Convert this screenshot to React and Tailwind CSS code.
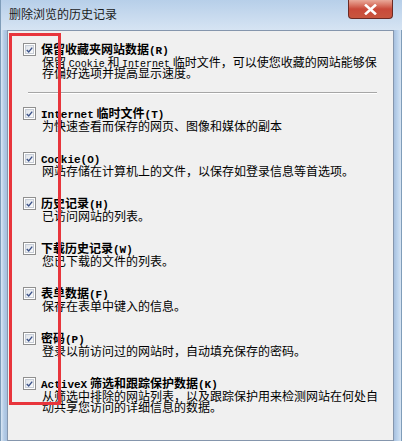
import React from 'react';

const items = [
    {
        title: [{ t: '保留收藏夹网站数据' }, { t: '(R)', m: true }],
        desc: [
            [{ t: '保留 ' }, { t: 'Cookie', m: true }, { t: ' 和 ' }, { t: 'Internet', m: true }, { t: ' 临时文件，可以使您收藏的网站能够保' }],
            [{ t: '存偏好选项并提高显示速度。' }],
        ],
    },
    {
        title: [{ t: 'Internet', m: true }, { t: ' 临时文件' }, { t: '(T)', m: true }],
        desc: [[{ t: '为快速查看而保存的网页、图像和媒体的副本' }]],
    },
    {
        title: [{ t: 'Cookie(O)', m: true }],
        desc: [[{ t: '网站存储在计算机上的文件，以保存如登录信息等首选项。' }]],
    },
    {
        title: [{ t: '历史记录' }, { t: '(H)', m: true }],
        desc: [[{ t: '已访问网站的列表。' }]],
    },
    {
        title: [{ t: '下载历史记录' }, { t: '(W)', m: true }],
        desc: [[{ t: '您已下载的文件的列表。' }]],
    },
    {
        title: [{ t: '表单数据' }, { t: '(F)', m: true }],
        desc: [[{ t: '保存在表单中键入的信息。' }]],
    },
    {
        title: [{ t: '密码' }, { t: '(P)', m: true }],
        desc: [[{ t: '登录以前访问过的网站时，自动填充保存的密码。' }]],
    },
    {
        title: [{ t: 'ActiveX', m: true }, { t: ' 筛选和跟踪保护数据' }, { t: '(K)', m: true }],
        desc: [
            [{ t: '从筛选中排除的网站列表，以及跟踪保护用来检测网站在何处自' }],
            [{ t: '动共享您访问的详细信息的数据。' }],
        ],
    },
];

// Win7 style checked box
const CheckBox = () => (
    <div className="w-[13px] h-[13px] shrink-0 border border-[#8f8f8f] bg-white p-[1px] mt-[1px]">
        <div className="w-full h-full border border-[#c7cdd6] bg-gradient-to-br from-[#dfe3e9] to-[#fbfbfb] flex items-center justify-center">
            <svg width="9" height="8" viewBox="0 0 9 8">
                <path d="M1 4 L3.5 6.5 L8 1" fill="none" stroke="#3b5289" strokeWidth="1.8" />
            </svg>
        </div>
    </div>
);

const Runs = ({ runs, bold }) =>
    runs.map((r, i) =>
        r.m ? (
            <span
                key={i}
                className={bold ? "font-['Liberation_Mono',monospace] text-[11px] font-bold" : "font-['Liberation_Mono',monospace] text-[10px]"}
            >
                {r.t}
            </span>
        ) : (
            <span key={i}>{r.t}</span>
        )
    );

const Item = ({ item }) => (
    <div className="flex gap-[5px]">
        <CheckBox />
        <div className="flex flex-col">
            <div className="h-[14px] text-[12px] leading-[14px] font-bold text-black whitespace-nowrap">
                <Runs runs={item.title} bold />
            </div>
            {item.desc.map((line, i) => (
                <div key={i} className="h-[11px] text-[12px] leading-[11px] text-black pl-[1px] whitespace-nowrap">
                    <Runs runs={line} />
                </div>
            ))}
        </div>
    </div>
);

const App = () => {
    return (
        <div className="relative w-[402px] h-[441px] overflow-hidden bg-[#bcd4ee] font-['Noto_Sans_CJK_SC',sans-serif]">
            {/* Title bar */}
            <div className="h-[30px] flex items-start justify-between bg-gradient-to-b from-[#b7cfe9] to-[#d6e4f3] border-l border-[#7f9db9]">
                <div className="pl-[8px] pt-[6px] text-[12px] leading-[16px] text-[#1b1b1b]">删除浏览的历史记录</div>
                <div className="mr-[9px] w-[45px] h-[19px] rounded-b-[4px] border border-t-0 border-[#6b2a24] bg-gradient-to-b from-[#e9a99a] via-[#c9493a] to-[#c8563f] flex items-center justify-center">
                    <svg width="13" height="11" viewBox="0 0 13 11">
                        <path d="M2 1.5 L11 9.5 M11 1.5 L2 9.5" stroke="#fff" strokeWidth="2.6" strokeLinecap="square" />
                    </svg>
                </div>
            </div>

            <div className="flex h-[411px]">
                {/* Left frame */}
                <div className="w-[7px] bg-gradient-to-r from-[#dbe7f4] via-[#b3cbe6] to-[#a7c0de] border-l border-[#7f9db9]" />

                {/* Content panel */}
                <div className="flex-1 bg-[#f0f0f0] border border-[#8596ad] pt-[11px] pl-[15px]">
                    <Item item={items[0]} />
                    <div className="mt-[14px] ml-[5px] w-[349px] h-px bg-[#a6a6a6] border-b border-white box-content" />
                    <div className="mt-[12px] flex flex-col gap-[20px]">
                        {items.slice(1).map((item, i) => (
                            <Item key={i} item={item} />
                        ))}
                    </div>
                </div>

                {/* Right frame */}
                <div className="w-[8px] bg-gradient-to-r from-[#a7c0de] via-[#bcd3ec] to-[#d5e3f2] border-r border-[#7f9db9]" />
            </div>

            {/* Red annotation box */}
            <div className="absolute left-[9px] top-[33px] w-[52px] h-[372px] border-[3px] border-[#e8353c]" />
        </div>
    );
};

export default App;
